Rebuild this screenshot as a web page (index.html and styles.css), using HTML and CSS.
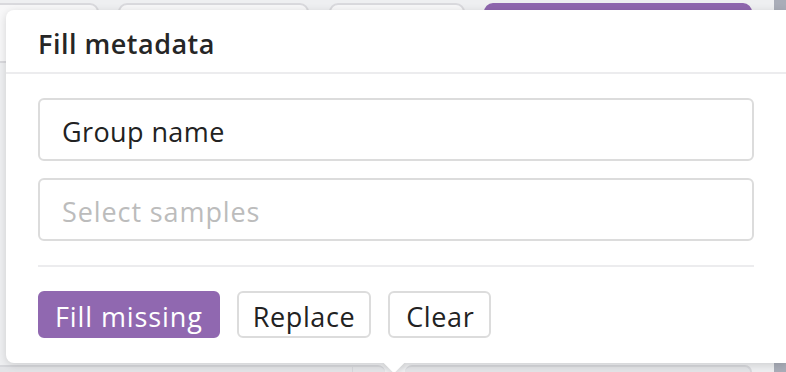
FILE: index.html
```html
<!DOCTYPE html>
<html lang="en">
<head>
<meta charset="utf-8">
<title>Fill metadata</title>
<link rel="stylesheet" href="styles.css">
</head>
<body>
<div class="page">
  <div class="main">
    <div class="toolbar">
      <div class="tb-btn tb-first"></div>
      <div class="tb-btn tb-second"></div>
      <div class="tb-btn tb-third"></div>
      <div class="tb-btn tb-primary"></div>
    </div>
    <div class="bottom-row">
      <div class="bt-box bt-left"><span class="bt-divider"></span></div>
      <div class="bt-box bt-right"></div>
    </div>
  </div>
  <div class="strip"></div>
</div>

<div class="popover">
  <div class="pop-header">
    <h2 class="pop-title">Fill metadata</h2>
  </div>
  <div class="pop-body">
    <div class="field">Group name</div>
    <div class="field placeholder">Select samples</div>
    <div class="sep"></div>
    <div class="actions">
      <button class="btn btn-primary">Fill missing</button>
      <button class="btn">Replace</button>
      <button class="btn btn-clear">Clear</button>
    </div>
  </div>
  <div class="arrow"></div>
</div>
</body>
</html>
```

FILE: styles.css
```css
* { box-sizing: border-box; }
html, body { margin: 0; padding: 0; }
body {
  width: 786px;
  height: 372px;
  overflow: hidden;
  background: #eeeff1;
  font-family: "Open Sans", "Noto Sans", sans-serif;
  position: relative;
}

.page {
  display: flex;
  height: 372px;
  overflow: hidden;
}
.main {
  flex: 1;
  display: flex;
  flex-direction: column;
  justify-content: space-between;
  padding-top: 3px;
  padding-right: 22px;
  overflow: hidden;
}
.toolbar {
  display: flex;
  gap: 19px;
  height: 60px;
}
.tb-btn {
  height: 60px;
  background: #f7f7f8;
  border: 2px solid #d9d9dd;
  border-radius: 9px;
}
.tb-first { width: 107px; margin-left: -8px; }
.tb-second { width: 191px; }
.tb-third { width: 137px; margin-left: 1px; }
.tb-primary { width: 268px; background: #8e66ae; border-color: #8e66ae; }

.bottom-row {
  display: flex;
  gap: 20px;
  height: 7px;
}
.bt-box {
  height: 7px;
  background: #e3e4e7;
  border-top: 2px solid #d6d7db;
  border-radius: 12px 12px 0 0;
  position: relative;
}
.bt-left { width: 393px; margin-left: -8px; }
.bt-right { flex: 1; border-right: 2px solid #d6d7db; }
.bt-divider {
  position: absolute;
  left: 360px;
  top: 0;
  bottom: 0;
  border-left: 1px solid #d6d7db;
}
.strip {
  width: 12px;
  background: #a9adb8;
}

.popover {
  position: absolute;
  left: 6px;
  top: 10px;
  width: 780px;
  background: #fff;
  border-radius: 8px 0 0 8px;
  box-shadow: 0 2px 8px rgba(0, 0, 0, 0.14);
}
.pop-header {
  height: 64px;
  border-bottom: 2px solid #ececee;
  display: flex;
  align-items: center;
  padding: 0 32px;
}
.pop-title {
  margin: 0;
  font-size: 27px;
  font-weight: 600;
  letter-spacing: 0.5px;
  color: #262626;
  padding-top: 4px;
}
.pop-body {
  padding: 24px 32px 25px;
  display: flex;
  flex-direction: column;
}
.field {
  height: 63px;
  border: 2px solid #dcdcdc;
  border-radius: 6px;
  padding: 3px 22px 0;
  display: flex;
  align-items: center;
  font-size: 27px;
  letter-spacing: 0.4px;
  color: #222;
}
.field + .field { margin-top: 17px; }
.field.placeholder { color: #bcbcbc; letter-spacing: 0.9px; }
.sep {
  height: 2px;
  background: #ececee;
  margin: 24px 0 24px;
}
.actions {
  display: flex;
  gap: 17px;
}
.btn {
  height: 47px;
  padding: 3px 14px 0;
  border: 2px solid #dcdcdc;
  border-radius: 6px;
  background: #fff;
  font-family: inherit;
  font-size: 27px;
  letter-spacing: 0.6px;
  color: #222;
  line-height: 1;
}
.btn-clear {
  padding: 3px 15px 0 16px;
}
.btn-primary {
  padding: 3px 15px 0;
  letter-spacing: 0.9px;
  background: #9068b0;
  border-color: #9068b0;
  color: #fff;
}
.arrow {
  position: absolute;
  left: 380px;
  bottom: -7px;
  width: 16px;
  height: 16px;
  background: #fff;
  transform: rotate(45deg);
  box-shadow: 3px 3px 4px rgba(0, 0, 0, 0.06);
}
```
